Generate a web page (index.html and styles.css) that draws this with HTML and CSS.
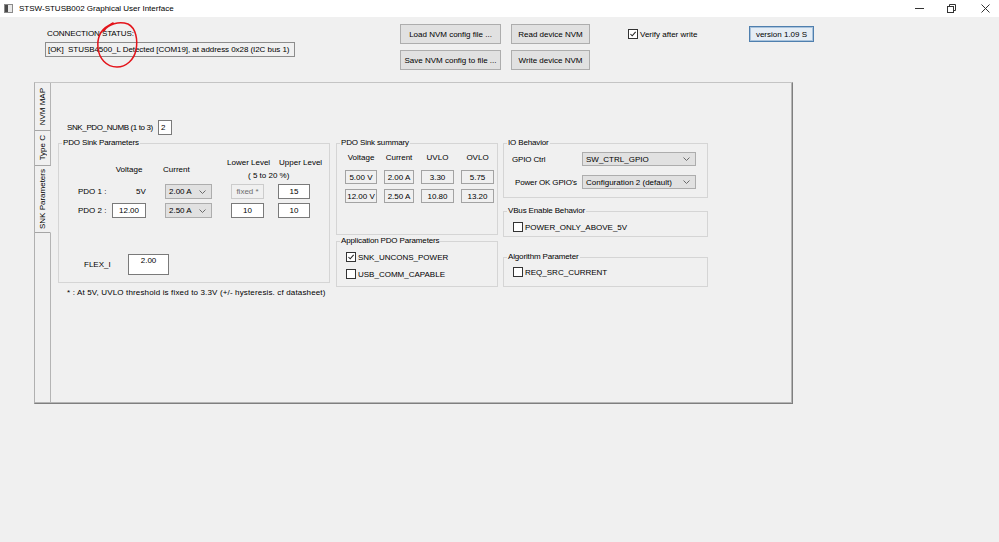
FILE: index.html
```html
<!DOCTYPE html>
<html>
<head>
<meta charset="utf-8">
<title>STSW-STUSB002 Graphical User Interface</title>
<link rel="stylesheet" href="styles.css">
</head>
<body>
<div class="window">
  <div class="titlebar">
    <svg class="appicon" viewBox="0 0 9 9"><rect x="0.5" y="0.5" width="8" height="8" fill="#e9e9e9" stroke="#8a8a8a"/><rect x="1" y="1" width="3" height="7" fill="#4a4a4a"/></svg>
    <span class="title">STSW-STUSB002 Graphical User Interface</span>
    <div class="winctrls">
      <svg class="wc min" viewBox="0 0 9 9"><path d="M0 4.5 H9" stroke="#333" stroke-width="1"/></svg>
      <svg class="wc max" viewBox="0 0 9 9"><path d="M2.5 2.5 V0.5 H8.5 V6.5 H6.5" fill="none" stroke="#333"/><rect x="0.5" y="2.5" width="6" height="6" fill="#fff" stroke="#333"/></svg>
      <svg class="wc close" viewBox="0 0 9 9"><path d="M0.5 0.5 L8.5 8.5 M8.5 0.5 L0.5 8.5" stroke="#333" stroke-width="1"/></svg>
    </div>
  </div>
  <div class="client">
    <div class="top">
      <div class="conn">
        <div class="conn-label">CONNECTION STATUS:</div>
        <div class="conn-box">[OK]&nbsp; STUSB4500_L Detected [COM19], at address 0x28 (I2C bus 1)</div>
      </div>
      <div class="btngrid">
        <div class="btn">Load NVM config file ...</div>
        <div class="btn">Read device NVM</div>
        <div class="btn">Save NVM config to file ...</div>
        <div class="btn">Write device NVM</div>
      </div>
      <div class="chk verify"><span class="box"><svg viewBox="0 0 10 10"><path d="M1.8 5 L4 7.3 L8.3 2.3"/></svg></span><span>Verify after write</span></div>
      <div class="btn version">version 1.09 S</div>
    </div>

    <div class="tabctl">
      <div class="tabstrip">
        <div class="tab t1"><span class="vt">NVM MAP</span></div>
        <div class="tab t2"><span class="vt">Type C</span></div>
        <div class="tab t3 active"><span class="vt">SNK Parameters</span></div>
        <div class="tabfill"></div>
      </div>
      <div class="page">
        <div class="col col1">
          <div class="pdonumb"><span class="pdonumb-lbl">SNK_PDO_NUMB (1 to 3)</span><div class="tb numb">2</div></div>
          <fieldset class="grp g-sink">
            <legend>PDO Sink Parameters</legend>
            <div class="sinkgrid">
              <div class="h-volt">Voltage</div>
              <div class="h-cur">Current</div>
              <div class="h-low">Lower Level</div>
              <div class="h-up">Upper Level</div>
              <div class="h-range">( 5 to 20 %)</div>

              <div class="lbl r3">PDO 1 :</div>
              <div class="v5 r3">5V</div>
              <div class="cb r3 c3"><span>2.00 A</span><svg class="chev" viewBox="0 0 7 4"><path d="M0.5 0.5 L3.5 3.5 L6.5 0.5"/></svg></div>
              <div class="tb dis r3 c4">fixed *</div>
              <div class="tb r3 c5">15</div>

              <div class="lbl r4">PDO 2 :</div>
              <div class="tb r4 c2">12.00</div>
              <div class="cb r4 c3"><span>2.50 A</span><svg class="chev" viewBox="0 0 7 4"><path d="M0.5 0.5 L3.5 3.5 L6.5 0.5"/></svg></div>
              <div class="tb r4 c4">10</div>
              <div class="tb r4 c5">10</div>
            </div>
            <div class="flexrow"><span class="flex-lbl">FLEX_I</span><div class="tb flexbox">2.00</div></div>
          </fieldset>
          <div class="note">* : At 5V, UVLO threshold is fixed to 3.3V (+/- hysteresis. cf datasheet)</div>
        </div>

        <div class="col col2">
          <fieldset class="grp g-sum">
            <legend>PDO Sink summary</legend>
            <div class="sumgrid">
              <div class="sh">Voltage</div>
              <div class="sh">Current</div>
              <div class="sh">UVLO</div>
              <div class="sh">OVLO</div>
              <div class="ro">5.00 V</div>
              <div class="ro">2.00 A</div>
              <div class="ro">3.30</div>
              <div class="ro">5.75</div>
              <div class="ro">12.00 V</div>
              <div class="ro">2.50 A</div>
              <div class="ro">10.80</div>
              <div class="ro">13.20</div>
            </div>
          </fieldset>
          <fieldset class="grp g-app">
            <legend>Application PDO Parameters</legend>
            <div class="chklist">
              <div class="chk"><span class="box"><svg viewBox="0 0 10 10"><path d="M1.8 5 L4 7.3 L8.3 2.3"/></svg></span><span>SNK_UNCONS_POWER</span></div>
              <div class="chk"><span class="box"></span><span>USB_COMM_CAPABLE</span></div>
            </div>
          </fieldset>
        </div>

        <div class="col col3">
          <fieldset class="grp g-io">
            <legend>IO Behavior</legend>
            <div class="iogrid">
              <div class="io-lbl">GPIO Ctrl</div>
              <div class="cb"><span>SW_CTRL_GPIO</span><svg class="chev" viewBox="0 0 7 4"><path d="M0.5 0.5 L3.5 3.5 L6.5 0.5"/></svg></div>
              <div class="io-lbl pok">Power OK GPIO's</div>
              <div class="cb"><span>Configuration 2 (default)</span><svg class="chev" viewBox="0 0 7 4"><path d="M0.5 0.5 L3.5 3.5 L6.5 0.5"/></svg></div>
            </div>
          </fieldset>
          <fieldset class="grp g-vbus">
            <legend>VBus Enable Behavior</legend>
            <div class="chklist one">
              <div class="chk"><span class="box"></span><span>POWER_ONLY_ABOVE_5V</span></div>
            </div>
          </fieldset>
          <fieldset class="grp g-algo">
            <legend>Algorithm Parameter</legend>
            <div class="chklist one algo">
              <div class="chk"><span class="box"></span><span>REQ_SRC_CURRENT</span></div>
            </div>
          </fieldset>
        </div>
      </div>
    </div>
  </div>

  <svg class="annot" viewBox="0 0 999 542" width="999" height="542">
    <path d="M104 31 C108 24 119 21 128 24 C136 28 138 40 136 50 C134 60 126 67 117 67 C106 67 99 58 98 48 C97 38 101 30 108 26 L113 23" fill="none" stroke="#e3141b" stroke-width="1.5" stroke-linecap="round"/>
  </svg>
</div>
</body>
</html>
```

FILE: styles.css
```css
* { box-sizing: border-box; }
html, body { margin: 0; padding: 0; }
body {
  width: 999px;
  height: 542px;
  overflow: hidden;
  background: #f0f0f0;
  font-family: "Liberation Sans", Arial, sans-serif;
  font-size: 8px;
  color: #000;
}
.window { position: relative; width: 999px; height: 542px; }

/* title bar */
.titlebar { height: 17px; background: #fff; display: flex; align-items: center; }
.appicon { margin-left: 4px; width: 9px; height: 9px; display: block; }
.title { margin-left: 6px; font-size: 8px; line-height: 10px; }
.winctrls { margin-left: auto; margin-right: 9px; display: flex; align-items: center; }
.wc { width: 9px; height: 9px; display: block; }
.wc.min { margin-right: 23px; }
.wc.max { margin-right: 25px; }

/* top area */
.client { height: 525px; }
.top { display: flex; align-items: flex-start; height: 65px; }
.conn { margin-left: 45px; margin-top: 12px; width: 250px; }
.conn-label { line-height: 10px; padding-left: 2px; letter-spacing: -0.1px; }
.conn-box {
  margin-top: 3px;
  height: 15px;
  border: 1px solid #8c8c8c;
  background: #f0f0f0;
  line-height: 13px;
  padding-left: 2px;
  white-space: nowrap;
  letter-spacing: -0.06px;
}
.btngrid {
  margin-left: 105px;
  margin-top: 7px;
  display: grid;
  grid-template-columns: 101px 79px;
  grid-template-rows: 20px 20px;
  column-gap: 10px;
  row-gap: 6px;
}
.btn {
  background: #e1e1e1;
  border: 1px solid #adadad;
  display: flex;
  align-items: center;
  justify-content: center;
  white-space: nowrap;
}
.verify { flex: 0 0 121px; margin-left: 38px; margin-top: 12px; }
.version {
  margin-top: 9px;
  width: 65px;
  height: 16px;
  background: #e5edf5;
  border: 1px solid #4f7fae;
  box-shadow: inset 0 0 0 1px #a9c3dc;
}

/* checkboxes */
.chk { display: flex; align-items: center; height: 10px; white-space: nowrap; }
.box {
  width: 10px;
  height: 10px;
  border: 1px solid #333;
  background: #fff;
  margin-right: 2px;
  display: block;
  flex: 0 0 10px;
}
.box svg { display: block; width: 8px; height: 8px; }
.box svg path { fill: none; stroke: #222; stroke-width: 1.3; }

/* tab control */
.tabctl {
  margin-left: 34px;
  width: 759px;
  height: 322px;
  display: flex;
  border: 1px solid;
  border-color: #c4c4c4 #7f7f7f #7f7f7f #b0b0b0;
  box-shadow: inset -1px -1px 0 #b5b5b5;
}
.tabstrip { width: 16px; display: flex; flex-direction: column; }
.tab {
  border-right: 1px solid #b4b4b4;
  border-bottom: 1px solid #a5a5a5;
  display: flex;
  align-items: center;
  justify-content: center;
}
.tab.t1 { height: 48px; }
.tab.t2 { height: 35px; }
.tab.t3 { height: 67px; }
.tab.active { border-right-color: transparent; }
.vt { writing-mode: vertical-rl; transform: rotate(180deg); line-height: 10px; white-space: nowrap; }
.tabfill { flex: 1; border-right: 1px solid #b4b4b4; }

.page { flex: 1; display: flex; align-items: flex-start; }
.col { display: flex; flex-direction: column; }
.col1 { margin-left: 7px; width: 272px; }
.col2 { margin-left: 6px; width: 162px; margin-top: 55px; }
.col3 { margin-left: 5px; width: 205px; margin-top: 55px; }

/* group boxes */
.grp { margin: 0; padding: 0; min-width: 0; border: 1px solid #d5d5d5; }
.grp legend { padding: 0 1px; margin-left: 3px; line-height: 10px; white-space: nowrap; letter-spacing: -0.15px; }

/* inputs */
.tb {
  height: 15px;
  background: #fff;
  border: 1px solid #7a7a7a;
  display: flex;
  align-items: center;
  justify-content: center;
  white-space: nowrap;
}
.tb.dis { background: #f0f0f0; border-color: #cccccc; color: #6d6d6d; }
.cb {
  height: 15px;
  background: #e1e1e1;
  border: 1px solid #adadad;
  display: flex;
  align-items: center;
  justify-content: space-between;
  padding-left: 3px;
  white-space: nowrap;
}
.chev { width: 7px; height: 4px; margin-right: 5px; display: block; }
.chev path { fill: none; stroke: #6a6a6a; stroke-width: 1; }

/* column 1 */
.pdonumb { margin-top: 37px; height: 15px; display: flex; align-items: center; padding-left: 9px; }
.pdonumb-lbl { width: 91px; white-space: nowrap; letter-spacing: -0.38px; }
.numb { width: 14px; justify-content: flex-start; padding-left: 2px; }
.g-sink { margin-top: 3px; padding-bottom: 7px; }
.sinkgrid {
  margin-top: 10px;
  margin-left: 19px;
  display: grid;
  grid-template-columns: 34px 34px 19px 47px 19px 33px 14px 32px;
  grid-template-rows: 9px 9px 15px 15px;
  row-gap: 4px;
  line-height: 10px;
  white-space: nowrap;
}
.h-volt { grid-column: 2; grid-row: 1 / 3; align-self: center; justify-self: center; margin-top: 2px; }
.h-cur { grid-column: 4; grid-row: 1 / 3; align-self: center; margin-left: -2px; margin-top: 2px; }
.h-low { grid-column: 5 / 9; grid-row: 1; margin-left: 15px; }
.h-up { grid-column: 7 / 9; grid-row: 1; margin-left: 15px; }
.h-range { grid-column: 5 / 9; grid-row: 2; margin-left: 36px; }
.r3 { grid-row: 3; }
.r4 { grid-row: 4; }
.lbl { grid-column: 1; align-self: center; }
.v5 { grid-column: 2; align-self: center; margin-left: 24px; }
.c2 { grid-column: 2; }
.c3 { grid-column: 4; }
.c4 { grid-column: 6; }
.c5 { grid-column: 8; }
.flexrow { margin-top: 36px; display: flex; align-items: center; padding-left: 25px; }
.flex-lbl { width: 44px; }
.flexbox { width: 41px; height: 21px; align-items: flex-start; padding-top: 1px; }
.note { margin-top: 5px; padding-left: 9px; line-height: 10px; white-space: nowrap; letter-spacing: 0.15px; }

/* column 2 */
.g-sum { padding-bottom: 31px; }
.sumgrid {
  margin-top: 5px;
  margin-left: 8px;
  display: grid;
  grid-template-columns: 32px 30px 33px 33px;
  grid-template-rows: 12px 14px 14px;
  column-gap: 7px;
  row-gap: 5px;
}
.sh { line-height: 10px; text-align: center; white-space: nowrap; }
.ro {
  height: 14px;
  border: 1px solid #a3a3a3;
  background: #f0f0f0;
  display: flex;
  align-items: center;
  justify-content: center;
  white-space: nowrap;
}
.g-app { margin-top: 1px; }
.chklist { padding: 6px 0 7px 9px; display: flex; flex-direction: column; gap: 7px; }
.chklist.one { padding: 6px 0 4px 9px; }
.chklist.one.algo { padding: 5px 0 9px 9px; }

/* column 3 */
.iogrid {
  margin-top: 4px;
  padding: 0 10px 8px 8px;
  display: grid;
  grid-template-columns: 70px 114px;
  grid-template-rows: 14px 14px;
  row-gap: 9px;
  align-items: center;
}
.iogrid .cb { height: 14px; }
.io-lbl { white-space: nowrap; letter-spacing: -0.15px; }
.io-lbl.pok { margin-left: 3px; }
.g-vbus { margin-top: 8px; }
.g-algo { margin-top: 15px; }

/* annotation overlay */
.annot { position: absolute; left: 0; top: 0; pointer-events: none; }
```
